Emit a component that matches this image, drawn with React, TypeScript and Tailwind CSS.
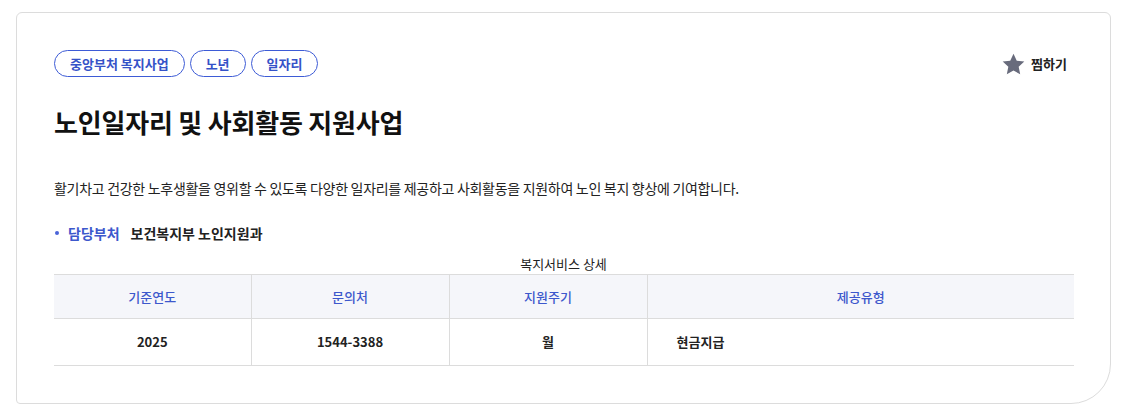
const tags = ["중앙부처 복지사업", "노년", "일자리"];

const heads = ["기준연도", "문의처", "지원주기", "제공유형"];

const StarIcon = () => (
  <svg width="23" height="22" viewBox="0 0 24 23" fill="#686b7c">
    <path d="M12 0.8l3.4 7.3 7.9 0.9-5.9 5.4 1.6 7.9L12 18.3l-7 4 1.6-7.9L0.7 9l7.9-0.9z" />
  </svg>
);

export default function App() {
  return (
    <div
      className="bg-white pl-4 pt-3"
      style={{ fontFamily: '"Noto Sans CJK KR", "Noto Sans", sans-serif' }}
    >
      <div className="h-[392px] w-[1095px] rounded-t-[6px] rounded-bl-[4px] rounded-br-[40px] border border-[#dcdcdc] px-[37px] pt-[37px]">
        {/* tags + bookmark */}
        <div className="flex items-center justify-between">
          <div className="flex gap-[5px]">
            {tags.map((t) => (
              <span
                key={t}
                className="flex h-[27px] items-center rounded-full border border-[#3d5bd6] px-[15px] text-[13px] font-semibold text-[#3552c8]"
              >
                {t}
              </span>
            ))}
          </div>
          <button className="mr-[6px] flex items-center gap-[6px] text-[13px] font-bold text-[#222]">
            <StarIcon />
            찜하기
          </button>
        </div>

        <h1 className="mt-[27px] text-[26px] font-bold leading-[36px] tracking-[-0.2px] text-[#111]">
          노인일자리 및 사회활동 지원사업
        </h1>

        <p className="mt-[38px] text-[14px] leading-5 tracking-[-0.3px] text-[#222]">
          활기차고 건강한 노후생활을 영위할 수 있도록 다양한 일자리를 제공하고 사회활동을 지원하여 노인 복지 향상에 기여합니다.
        </p>

        <div className="mt-[25px] flex items-center text-[14px] font-bold leading-5">
          <span className="ml-[1px] mr-[9px] h-[4px] w-[4px] rounded-full bg-[#4a64d8]" />
          <span className="text-[#3d58cc]">담당부처</span>
          <span className="ml-[11px] text-[#222]">보건복지부 노인지원과</span>
        </div>

        <div className="mt-[12px] text-center text-[13px] leading-[18px] text-[#222]">
          복지서비스 상세
        </div>

        <table className="mt-[1px] w-[1020px] table-fixed border-collapse text-[13px]">
          <colgroup>
            <col className="w-[197px]" />
            <col className="w-[198px]" />
            <col className="w-[198px]" />
            <col />
          </colgroup>
          <thead>
            <tr className="h-[44px] border-y border-[#dcdcdc] bg-[#f5f6fa]">
              {heads.map((h, i) => (
                <th
                  key={h}
                  className={
                    "font-medium text-[#3d58cc] " +
                    (i < 3 ? "border-r border-[#dcdcdc]" : "")
                  }
                >
                  {h}
                </th>
              ))}
            </tr>
          </thead>
          <tbody>
            <tr className="h-[47px] border-b border-[#dcdcdc] font-bold text-[#222]">
              <td className="border-r border-[#dcdcdc] text-center">2025</td>
              <td className="border-r border-[#dcdcdc] text-center">1544-3388</td>
              <td className="border-r border-[#dcdcdc] text-center">월</td>
              <td className="pl-[29px] text-left">현금지급</td>
            </tr>
          </tbody>
        </table>
      </div>
    </div>
  );
}
